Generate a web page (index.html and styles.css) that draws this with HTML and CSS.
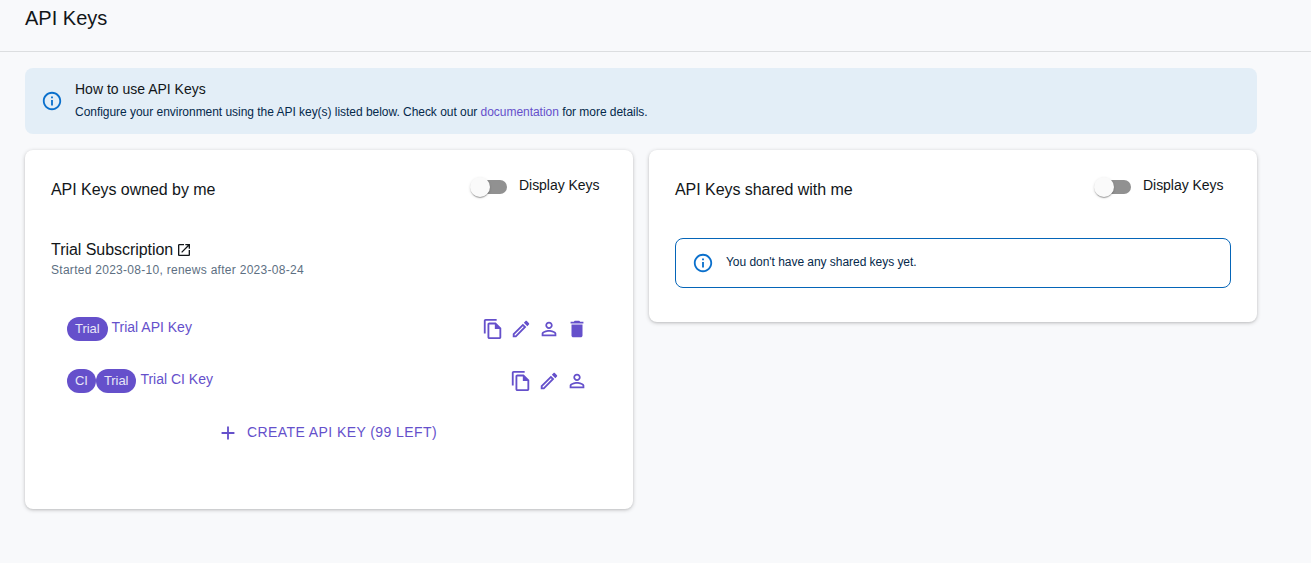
FILE: index.html
```html
<!DOCTYPE html>
<html lang="en">
<head>
<meta charset="utf-8">
<title>API Keys</title>
<link rel="stylesheet" href="styles.css">
</head>
<body>
<svg class="defs" aria-hidden="true">
  <symbol id="info" viewBox="0 0 24 24"><path d="M11 7h2v2h-2zm0 4h2v6h-2zm1-9C6.48 2 2 6.48 2 12s4.48 10 10 10 10-4.48 10-10S17.52 2 12 2zm0 18c-4.41 0-8-3.59-8-8s3.59-8 8-8 8 3.59 8 8-3.59 8-8 8z"/></symbol>
  <symbol id="open" viewBox="0 0 24 24"><path d="M19 19H5V5h7V3H5c-1.11 0-2 .9-2 2v14c0 1.1.89 2 2 2h14c1.1 0 2-.9 2-2v-7h-2v7zM14 3v2h3.59l-9.83 9.83 1.41 1.41L19 6.41V10h2V3h-7z"/></symbol>
  <symbol id="copy" viewBox="0 0 24 24"><path d="M16 1H4c-1.1 0-2 .9-2 2v14h2V3h12V1zm-1 4H8c-1.1 0-1.99.9-1.99 2L6 21c0 1.1.89 2 1.99 2H19c1.1 0 2-.9 2-2V11l-6-6zM8 21V7h6v5h5v9H8z"/></symbol>
  <symbol id="edit" viewBox="0 0 24 24"><path d="M14.06 9.02l.92.92L5.92 19H5v-.92l9.06-9.06M17.66 3c-.25 0-.51.1-.7.29l-1.83 1.83 3.75 3.75 1.83-1.83c.39-.39.39-1.02 0-1.41l-2.34-2.34c-.2-.2-.45-.29-.71-.29zm-3.6 3.19L3 17.25V21h3.75L17.81 9.94l-3.75-3.75z"/></symbol>
  <symbol id="person" viewBox="0 0 24 24"><path d="M12 5.9c1.16 0 2.1.94 2.1 2.1s-.94 2.1-2.1 2.1S9.9 9.16 9.9 8s.94-2.1 2.1-2.1m0 9c2.97 0 6.1 1.46 6.1 2.1v1.1H5.9V17c0-.64 3.13-2.1 6.1-2.1M12 4C9.79 4 8 5.79 8 8s1.79 4 4 4 4-1.79 4-4-1.79-4-4-4zm0 9c-2.67 0-8 1.34-8 4v3h16v-3c0-2.66-5.33-4-8-4z"/></symbol>
  <symbol id="trash" viewBox="0 0 24 24"><path d="M6 19c0 1.1.9 2 2 2h8c1.1 0 2-.9 2-2V7H6v12zM19 4h-3.5l-1-1h-5l-1 1H5v2h14V4z"/></symbol>
  <symbol id="plus" viewBox="0 0 24 24"><path d="M19 13h-6v6h-2v-6H5v-2h6V5h2v6h6v2z"/></symbol>
</svg>

<header class="page-header"><h1 class="page-title">API Keys</h1></header>

<main class="content">
  <section class="banner">
    <svg class="info-icon"><use href="#info"/></svg>
    <div class="banner-body">
      <h2 class="banner-title">How to use API Keys</h2>
      <p class="banner-text">Configure your environment using the API key(s) listed below. Check out our <a class="link" href="#">documentation</a> for more details.</p>
    </div>
  </section>

  <div class="cards">
    <section class="card card-owned">
      <div class="card-head">
        <h2 class="card-title">API Keys owned by me</h2>
        <label class="toggle"><span class="track"><span class="thumb"></span></span><span class="toggle-label">Display Keys</span></label>
      </div>
      <div class="subscription"><span>Trial Subscription</span><svg class="open-icon"><use href="#open"/></svg></div>
      <p class="dates">Started 2023-08-10, renews after 2023-08-24</p>
      <ul class="keys">
        <li class="key">
          <span class="chip">Trial</span><span class="key-name">Trial API Key</span>
          <span class="actions">
            <svg class="icon"><use href="#copy"/></svg>
            <svg class="icon"><use href="#edit"/></svg>
            <svg class="icon"><use href="#person"/></svg>
            <svg class="icon"><use href="#trash"/></svg>
          </span>
        </li>
        <li class="key">
          <span class="chip">CI</span><span class="chip">Trial</span><span class="key-name">Trial CI Key</span>
          <span class="actions">
            <svg class="icon"><use href="#copy"/></svg>
            <svg class="icon"><use href="#edit"/></svg>
            <svg class="icon"><use href="#person"/></svg>
          </span>
        </li>
      </ul>
      <button class="create"><svg class="icon"><use href="#plus"/></svg><span class="create-label">CREATE API KEY (99 LEFT)</span></button>
    </section>

    <section class="card">
      <div class="card-head">
        <h2 class="card-title">API Keys shared with me</h2>
        <label class="toggle"><span class="track"><span class="thumb"></span></span><span class="toggle-label">Display Keys</span></label>
      </div>
      <div class="notice">
        <svg class="info-icon"><use href="#info"/></svg>
        <span class="notice-text">You don't have any shared keys yet.</span>
      </div>
    </section>
  </div>
</main>
</body>
</html>
```
FILE: styles.css
```css
* { box-sizing: border-box; margin: 0; padding: 0; }
body {
  min-height: 563px;
  background: #f8f9fb;
  color: #121619;
  font-family: "Liberation Sans", Arial, Helvetica, sans-serif;
  white-space: nowrap;
}
.defs { display: none; }
svg { display: block; flex: none; fill: currentColor; }

.page-header { height: 52px; padding: 6px 25px 0; border-bottom: 1px solid #dcdee0; }
.page-title { font-size: 20px; line-height: 24px; font-weight: 400; }

.content { width: 1232px; margin: 16px 0 0 25px; }
.banner {
  display: flex;
  align-items: center;
  gap: 12px;
  height: 66px;
  padding: 0 16px;
  border-radius: 8px;
  background: #e3eef7;
}
.banner-body { padding-bottom: 2px; }
.info-icon { width: 22px; height: 22px; color: #0b70cc; }
.banner-title { font-size: 14px; line-height: 20px; font-weight: 400; margin-bottom: 3px; }
.banner-text { font-size: 12px; line-height: 20px; letter-spacing: -.035px; color: #05294b; }
.link { color: #6550cb; text-decoration: none; }

.cards { display: grid; grid-template-columns: 608px 608px; gap: 16px; align-items: start; margin-top: 16px; }
.card {
  height: 172px;
  padding: 26px;
  border-radius: 8px;
  background: #fff;
  box-shadow: 0 1px 4px rgba(0, 0, 0, .2), 0 1px 2px rgba(0, 0, 0, .08);
}
.card-owned { height: 359px; }
.card-head { display: flex; justify-content: space-between; height: 62px; }
.card-title { font-size: 16px; line-height: 27px; font-weight: 400; letter-spacing: -.05px; }
.toggle { display: flex; gap: 12px; width: 134px; }
.track { width: 34px; height: 14px; margin-top: 4px; border-radius: 7px; background: #919191; }
.thumb {
  display: block;
  width: 20px;
  height: 20px;
  margin: -3px 0 0 -3px;
  border-radius: 50%;
  background: #fafafa;
  box-shadow: 0 2px 1px -1px rgba(0, 0, 0, .2), 0 1px 1px rgba(0, 0, 0, .14), 0 1px 3px rgba(0, 0, 0, .12);
}
.toggle-label { font-size: 14px; line-height: 19px; letter-spacing: -.04px; }

.subscription { display: flex; align-items: center; gap: 3px; height: 24px; font-size: 16px; line-height: 24px; letter-spacing: -.05px; }
.open-icon { width: 16px; height: 16px; }
.dates { font-size: 12px; line-height: 16px; letter-spacing: .28px; color: #5d6f82; }
.keys { list-style: none; padding: 25px 19px 0 16px; }
.key { display: flex; align-items: center; height: 52px; }
.chip {
  height: 24px;
  padding: 0 8px;
  border-radius: 12px;
  background: #6550cb;
  color: #e8e6f7;
  font-size: 13px;
  line-height: 24px;
  letter-spacing: -.06px;
}
.key-name { margin: 0 0 4px 4px; font-size: 14px; line-height: 20px; color: #6550cb; }
.actions { display: flex; align-items: center; gap: 6px; margin-left: auto; color: #6550cb; }
.icon { width: 22px; height: 22px; }
.create {
  display: flex;
  align-items: center;
  gap: 8px;
  height: 52px;
  margin-left: 166px;
  border: 0;
  background: none;
  color: #6550cb;
  font: 14px/20px "Liberation Sans", Arial, sans-serif;
}
.create-label { padding-bottom: 2px; letter-spacing: .42px; }

.notice {
  display: flex;
  align-items: center;
  gap: 12px;
  height: 50px;
  padding: 0 16px;
  border: 1px solid #0565b8;
  border-radius: 8px;
}
.notice-text { padding-bottom: 2px; font-size: 12px; line-height: 20px; letter-spacing: -.04px; color: #05294b; }
```
